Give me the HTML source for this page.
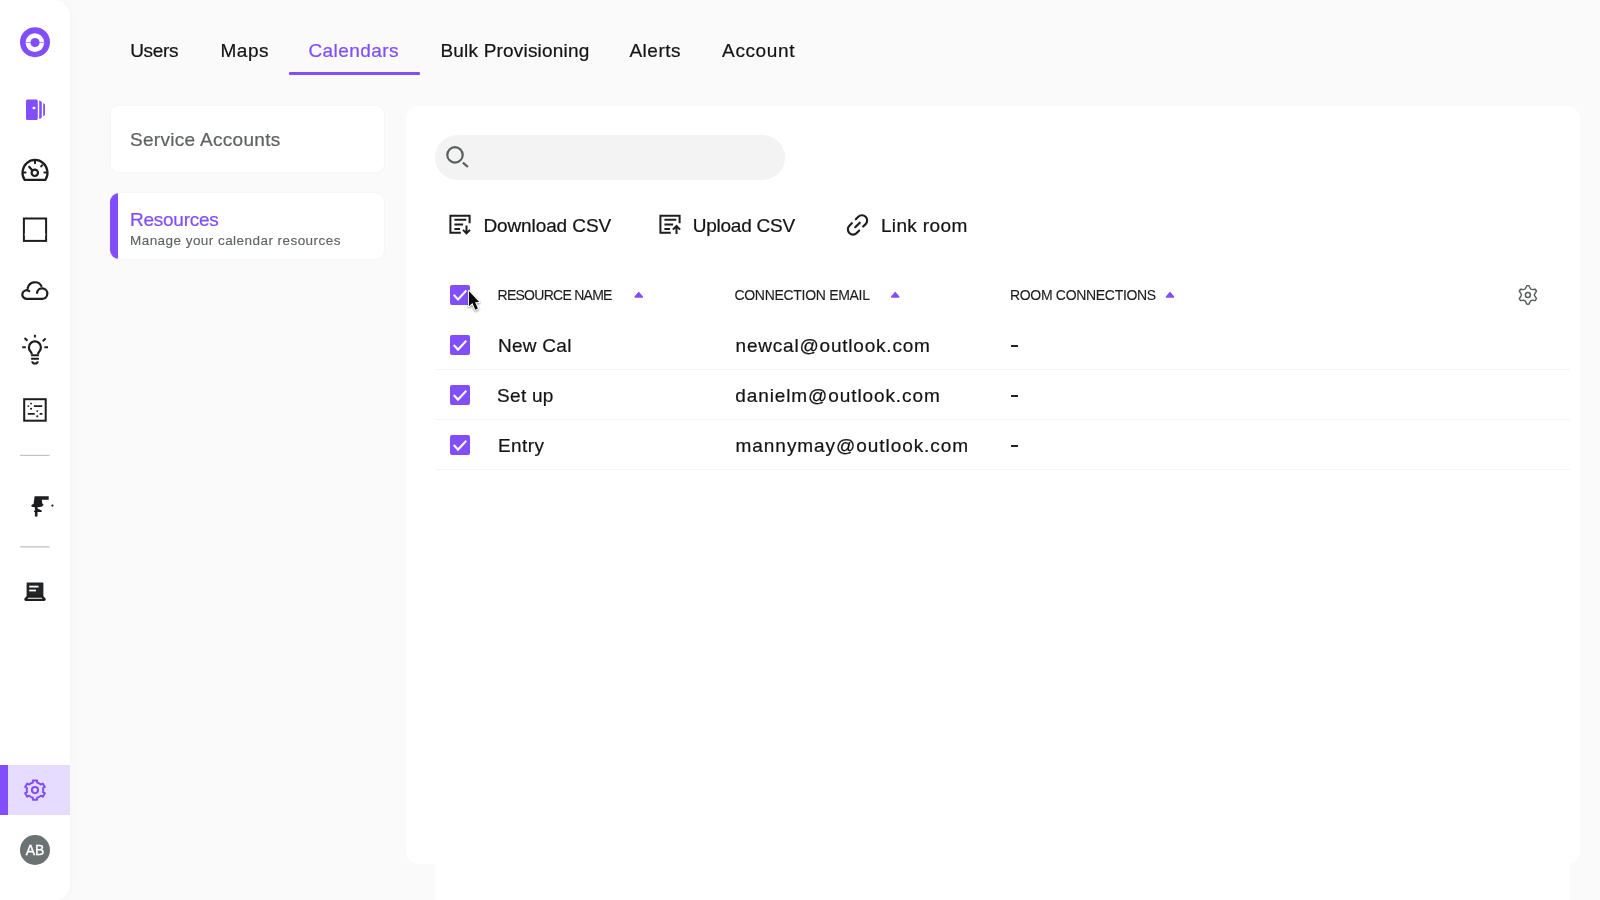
<!DOCTYPE html>
<html lang="en">
<head>
<meta charset="utf-8">
<title>Calendars - Resources</title>
<style>
*{box-sizing:border-box;margin:0;padding:0}
html,body{width:1600px;height:900px;overflow:hidden;background:#fafafa;font-family:"Liberation Sans",sans-serif;color:#141414}
.abs{position:absolute}
#wrap{position:absolute;left:0;top:0;width:1600px;height:900px;will-change:transform;transform:translateZ(0)}
#side{left:0;top:0;width:70px;height:900px;background:#fff;border-radius:0 16px 15px 0;box-shadow:0 0 6px rgba(0,0,0,.03)}
#active{left:0;top:765px;width:70px;height:50px;background:#e6dcff}
#active:before{content:"";position:absolute;left:0;top:0;width:7.5px;height:50px;background:#814efa}
#avatar{left:20px;top:835px;width:30px;height:30px;border-radius:50%;background:#6a7273;color:#fff;font-size:14px;line-height:30px;text-align:center;-webkit-text-stroke:0.35px #fff}
.tab{position:absolute;top:39px;font-size:19px;line-height:24px;white-space:nowrap;color:#141414}
.tab.on{color:#814efa}
#uline{left:289px;top:72.4px;width:130.8px;height:2.6px;background:#814efa;border-radius:1px}
.card{position:absolute;left:111px;width:273px;height:66px;background:#fff;border-radius:8px;box-shadow:0 0 3px rgba(0,0,0,.05)}
#main{left:405.7px;top:105.7px;width:1174.3px;height:758px;background:#fff;border-radius:13px}
#mainext{left:434.5px;top:850px;width:1135.5px;height:50px;background:#fff}
#search{left:435px;top:135px;width:350px;height:45px;border-radius:23px;background:#f3f3f3}
.act{position:absolute;top:214px;font-size:19px;line-height:24px;white-space:nowrap}
.th{position:absolute;top:285.6px;-webkit-text-stroke:0.12px currentColor;font-size:14px;line-height:18px;white-space:nowrap;color:#1c1c1c}
.cb{position:absolute;left:450px;width:20px;height:20px;border-radius:2px;background:#814efa}
.td{position:absolute;font-size:19px;line-height:24px;white-space:nowrap}
.sep{position:absolute;left:436px;width:1134px;height:1px;background:#f4f4f4}

.card .ct{position:absolute;left:19px;font-size:19px;line-height:24px;white-space:nowrap}
.card .cs{position:absolute;left:19px;top:40.1px;font-size:13.5px;line-height:16px;white-space:nowrap;color:#5e6263}
.grey{color:#5e6263}.pur{color:#814efa}
.card.sel{left:110px;width:274px;border-radius:9px;overflow:hidden}
.card.sel:before{content:"";position:absolute;left:0;top:0;width:7.5px;height:100%;background:#814efa}
.card.sel .ct,.card.sel .cs{left:20px}
.tab,.act,.td,.card .ct{-webkit-text-stroke:0.22px currentColor}
.card .cs{-webkit-text-stroke:0.12px currentColor}
.dash{position:absolute;left:1011px;width:6.5px;height:1.6px;background:#222}
</style>
</head>
<body>
<div id="wrap">
<aside>
<div id="side" class="abs"></div>
<div id="active" class="abs"></div>
<div id="avatar" class="abs">AB</div>
</aside>

<nav>
<div class="tab" style="left:130.2px;letter-spacing:-0.31px">Users</div>
<div class="tab" style="left:220.5px;letter-spacing:0.5px">Maps</div>
<div class="tab on" style="left:308.4px;letter-spacing:0.44px">Calendars</div>
<div class="tab" style="left:440.5px;letter-spacing:0.19px">Bulk Provisioning</div>
<div class="tab" style="left:629.4px;letter-spacing:0.52px">Alerts</div>
<div class="tab" style="left:722.1px;letter-spacing:0.61px">Account</div>
<div id="uline" class="abs"></div>
</nav>

<div class="card" style="top:105.5px"><div class="ct grey" style="top:22px;letter-spacing:0.3px">Service Accounts</div></div>
<div class="card sel" style="top:193px"><div class="ct pur" style="top:15px;letter-spacing:-0.25px">Resources</div><div class="cs" style="letter-spacing:0.45px">Manage your calendar resources</div></div>

<main>
<div id="main" class="abs"></div>
<div id="mainext" class="abs"></div>
<div id="search" class="abs"></div>

<div class="act" style="left:483.4px;letter-spacing:-0.1px">Download CSV</div>
<div class="act" style="left:692.75px;letter-spacing:-0.24px">Upload CSV</div>
<div class="act" style="left:880.9px;letter-spacing:0.37px">Link room</div>

<div class="cb" style="top:285px"></div>
<div class="th" style="left:497.5px;letter-spacing:-0.73px">RESOURCE NAME</div>
<div class="th" style="left:734.45px;letter-spacing:-0.3px">CONNECTION EMAIL</div>
<div class="th" style="left:1009.95px;letter-spacing:-0.31px">ROOM CONNECTIONS</div>

<div class="cb" style="top:335.2px"></div>
<div class="td" style="left:498px;top:334px;letter-spacing:0.27px">New Cal</div>
<div class="td" style="left:735.6px;top:334px;letter-spacing:0.79px">newcal@outlook.com</div>
<div class="dash" style="top:345.2px"></div>
<div class="sep" style="top:369px"></div>

<div class="cb" style="top:385.2px"></div>
<div class="td" style="left:497.1px;top:384px;letter-spacing:0.28px">Set up</div>
<div class="td" style="left:735.25px;top:384px;letter-spacing:0.9px">danielm@outlook.com</div>
<div class="dash" style="top:395.2px"></div>
<div class="sep" style="top:419px"></div>

<div class="cb" style="top:435.2px"></div>
<div class="td" style="left:498px;top:434px;letter-spacing:0.44px">Entry</div>
<div class="td" style="left:735.6px;top:434px;letter-spacing:0.94px">mannymay@outlook.com</div>
<div class="dash" style="top:445.2px"></div>
<div class="sep" style="top:469px"></div>

</main>
<svg id="icons" class="abs" style="left:0;top:0" width="1600" height="900" viewBox="0 0 1600 900" fill="none">
<!--ICONS-->
<circle cx="35" cy="42.2" r="15" fill="#814efa"/>
<circle cx="34.9" cy="42.6" r="9.3" fill="#fff"/>
<circle cx="35" cy="42.5" r="4.6" fill="#814efa"/>
<rect x="25.6" y="42.2" width="18.6" height="0.6" fill="#814efa"/>
<rect x="26" y="99.4" width="11.8" height="20.7" rx="1.6" fill="#814efa"/>
<rect x="32.6" y="106.8" width="2.8" height="2.4" rx="0.8" fill="#fff"/>
<path d="M39.2 100.4 L40.6 100.9 Q41.8 101.4 41.8 102.8 V116.6 Q41.8 118 40.6 118.5 L39.2 119 Z" fill="#814efa"/>
<path d="M43.2 103.2 L44 103.6 Q45 104.1 45 105.2 V114.2 Q45 115.3 44 115.8 L43.2 116.2 Z" fill="#814efa"/>
<g stroke="#1d1d1f" stroke-width="2.2" stroke-linecap="round" stroke-linejoin="round"><path d="M24.6 179.8 A12.5 12.8 0 1 1 45.4 179.8 Z"/><circle cx="34.8" cy="172.8" r="3.2"/><path d="M32.4 170.4 L29.2 166.8"/><path d="M35 161.6 V163.2 M23.8 172.6 H25.6 M44.4 172.6 H46.2 M41.2 166.4 L42.2 165.2" stroke-width="2"/></g>
<rect x="23.9" y="218.5" width="22.2" height="22.4" stroke="#1d1d1f" stroke-width="2"/>
<rect x="24.6" y="233.8" width="1" height="1.6" fill="#fff"/><rect x="44.4" y="233.8" width="1" height="1.6" fill="#fff"/>
<g stroke="#1d1d1f" stroke-width="2.2" stroke-linecap="round" stroke-linejoin="round"><path d="M27.7 288.3 A7.4 7.4 0 0 1 41.4 286"/><path d="M37 292.8 A5.2 5.2 0 1 1 42.2 298.8 H27.1 A4.3 4.3 0 1 1 29.2 291.1"/></g>
<g stroke="#1d1d1f" stroke-width="2.2" stroke-linecap="butt" stroke-linejoin="round"><path d="M31.6 354.3 V353.4 Q31.4 352.4 30.5 351.5 A6 6 0 1 1 39.3 351.5 Q38.4 352.4 38.2 353.4 V354.3"/><path d="M31.1 355.3 H38.9 M31.1 358.8 H38.9" stroke-width="2.1"/><path d="M32.2 361.4 Q32.4 363.6 35 363.6 Q37.6 363.6 37.8 361.4" stroke-width="2"/><path d="M34.9 334.8 V337.6 M22.2 347.2 H25.8 M44.4 347.2 H48 M24.6 338 L27.4 340.8 M45.6 338.4 L42.8 341.2" stroke-width="2"/></g>
<rect x="24.2" y="399.2" width="21.5" height="21.5" stroke="#1d1d1f" stroke-width="2"/>
<g stroke="#1d1d1f" stroke-width="1.8"><path d="M33.9 406.1 H42.2 M27.8 413.8 H34.7 M39.6 413.8 H42.4"/></g>
<g fill="#1d1d1f"><circle cx="31.1" cy="403.6" r="0.95"/><circle cx="28.4" cy="406.1" r="0.95"/><circle cx="31.1" cy="408.8" r="1.05"/><circle cx="37.3" cy="411.1" r="0.95"/><circle cx="37.3" cy="416.2" r="1.05"/></g>
<rect x="20" y="454.8" width="29.5" height="1.2" fill="#c4c4c4"/>
<rect x="20" y="546.2" width="29.5" height="1.3" fill="#c4c4c4"/>
<path d="M34.6 496.2 H48.7 V499.7 H41.8 L42.4 503.8 Q43.6 504 43.3 505.2 Q42.6 506.6 40 507 L37.5 507.2 V508.6 L41.7 510.4 V511.9 H37.5 V516.3 Q36.2 517.2 34.9 516.3 V512 H34 V510.7 H34.9 V507.2 L32.6 507.1 Q31 506.8 31.3 505.4 Q31.8 504.2 33.6 503.9 Z" fill="#1d1d1f"/>
<circle cx="52.4" cy="505.6" r="1.15" fill="#1d1d1f"/>
<rect x="26.6" y="582.5" width="16.8" height="13.5" rx="0.6" fill="#222426"/>
<rect x="29.2" y="585.7" width="9.3" height="1.8" fill="#fff"/><rect x="29.2" y="589.6" width="6.8" height="1.8" fill="#fff"/>
<path d="M27.9 596.5 L25.5 599.1 Q25.2 599.8 26 599.8 H44 Q44.8 599.8 44.5 599.1 L42.1 596.5 Z" stroke="#1d1d1f" stroke-width="2.3" stroke-linejoin="round" fill="#fff"/>
<path d="M32.90 782.46L32.90 780.40L37.10 780.40L37.10 782.46A8.29 7.90 0 0 1 40.90 784.55L42.77 783.52L44.87 786.98L43.00 788.01A8.29 7.90 0 0 1 43.00 792.19L44.87 793.22L42.77 796.68L40.90 795.65A8.29 7.90 0 0 1 37.10 797.74L37.10 799.80L32.90 799.80L32.90 797.74A8.29 7.90 0 0 1 29.10 795.65L27.23 796.68L25.13 793.22L27.00 792.19A8.29 7.90 0 0 1 27.00 788.01L25.13 786.98L27.23 783.52L29.10 784.55A8.29 7.90 0 0 1 32.90 782.46Z" stroke="#814efa" stroke-width="2" stroke-linejoin="round"/>
<circle cx="35" cy="790.1" r="3.1" stroke="#814efa" stroke-width="2"/>
<circle cx="455" cy="154.9" r="7.7" stroke="#5a5e5f" stroke-width="2.2"/>
<path d="M462.9 162.7 L467.9 167" stroke="#5a5e5f" stroke-width="2.3"/>
<g stroke="#1d1d1f" stroke-width="2" fill="none"><path d="M460.79999999999995 232.75 H450.4 V215.75 H469.59999999999997 V223.2"/><path d="M454.4 219.7 H466.29999999999995 M454.4 224.4 H463.09999999999997 M454.4 229 H460.0"/><path d="M466.5 225.4 V233 M463.0 229.9 L466.5 233.4 L470.0 229.9" stroke-linejoin="miter"/></g>
<g stroke="#1d1d1f" stroke-width="2" fill="none"><path d="M670.8 232.75 H660.4 V215.75 H679.6 V223.2"/><path d="M664.4 219.7 H676.3 M664.4 224.4 H673.1 M664.4 229 H670.0"/><path d="M676.5 234 V226 M672.9 229.6 L676.5 226 L680.1 229.6" stroke-linejoin="miter"/></g>
<g transform="translate(857.5 224.9) rotate(-45)" stroke="#1d1d1f" stroke-width="2.15" stroke-linecap="round" fill="none"><path d="M-2.8 -5.2 H-6.3 A5.2 5.2 0 0 0 -6.3 5.2 H-2.8"/><path d="M2.8 -5.2 H6.3 A5.2 5.2 0 0 1 6.3 5.2 H2.8"/><path d="M-3.2 0 H3.2"/></g>
<path d="M635.15 297 L638.75 292.6 L642.35 297 Z" fill="#814efa" stroke="#814efa" stroke-width="1.5" stroke-linejoin="round"/>
<path d="M891.6 297 L895.2 292.6 L898.8000000000001 297 Z" fill="#814efa" stroke="#814efa" stroke-width="1.5" stroke-linejoin="round"/>
<path d="M1166.4 297 L1170 292.6 L1173.6 297 Z" fill="#814efa" stroke="#814efa" stroke-width="1.5" stroke-linejoin="round"/>
<path d="M1525.77 287.92L1526.77 285.67A9.30 9.30 0 0 1 1529.03 285.67L1530.03 287.92Q1530.80 289.88 1532.88 289.56L1535.33 289.30A9.30 9.30 0 0 1 1536.46 291.27L1535.01 293.26Q1533.70 294.90 1535.01 296.54L1536.46 298.53A9.30 9.30 0 0 1 1535.33 300.50L1532.88 300.24Q1530.80 299.92 1530.03 301.88L1529.03 304.13A9.30 9.30 0 0 1 1526.77 304.13L1525.77 301.88Q1525.00 299.92 1522.92 300.24L1520.47 300.50A9.30 9.30 0 0 1 1519.34 298.53L1520.79 296.54Q1522.10 294.90 1520.79 293.26L1519.34 291.27A9.30 9.30 0 0 1 1520.47 289.30L1522.92 289.56Q1525.00 289.88 1525.77 287.92Z" stroke="#5a5e5f" stroke-width="1.45" stroke-linejoin="round"/>
<circle cx="1527.9" cy="294.9" r="2.5" stroke="#5a5e5f" stroke-width="1.5"/>
<path d="M458.00 300.99 L453.00 295.57 L454.41 294.04 L458.00 297.92 L465.59 289.70 L467.00 291.24Z" fill="#fff"/>
<path d="M458.00 351.19 L453.00 345.77 L454.41 344.24 L458.00 348.12 L465.59 339.90 L467.00 341.44Z" fill="#fff"/>
<path d="M458.00 401.19 L453.00 395.77 L454.41 394.24 L458.00 398.12 L465.59 389.90 L467.00 391.44Z" fill="#fff"/>
<path d="M458.00 451.19 L453.00 445.77 L454.41 444.24 L458.00 448.12 L465.59 439.90 L467.00 441.44Z" fill="#fff"/>
<g style="filter:drop-shadow(0.3px 1px 0.8px rgba(0,0,0,.45))"><path d="M468.9 290.9 V306.3 L472.4 303.1 L475.3 309.7 L477.9 308.6 L475.1 302.2 L479.2 301.9 Z" fill="#0a0a0a" stroke="#fff" stroke-width="2" paint-order="stroke" stroke-linejoin="round"/></g>
<!--/ICONS-->
</svg>
</div>
</body>
</html>
